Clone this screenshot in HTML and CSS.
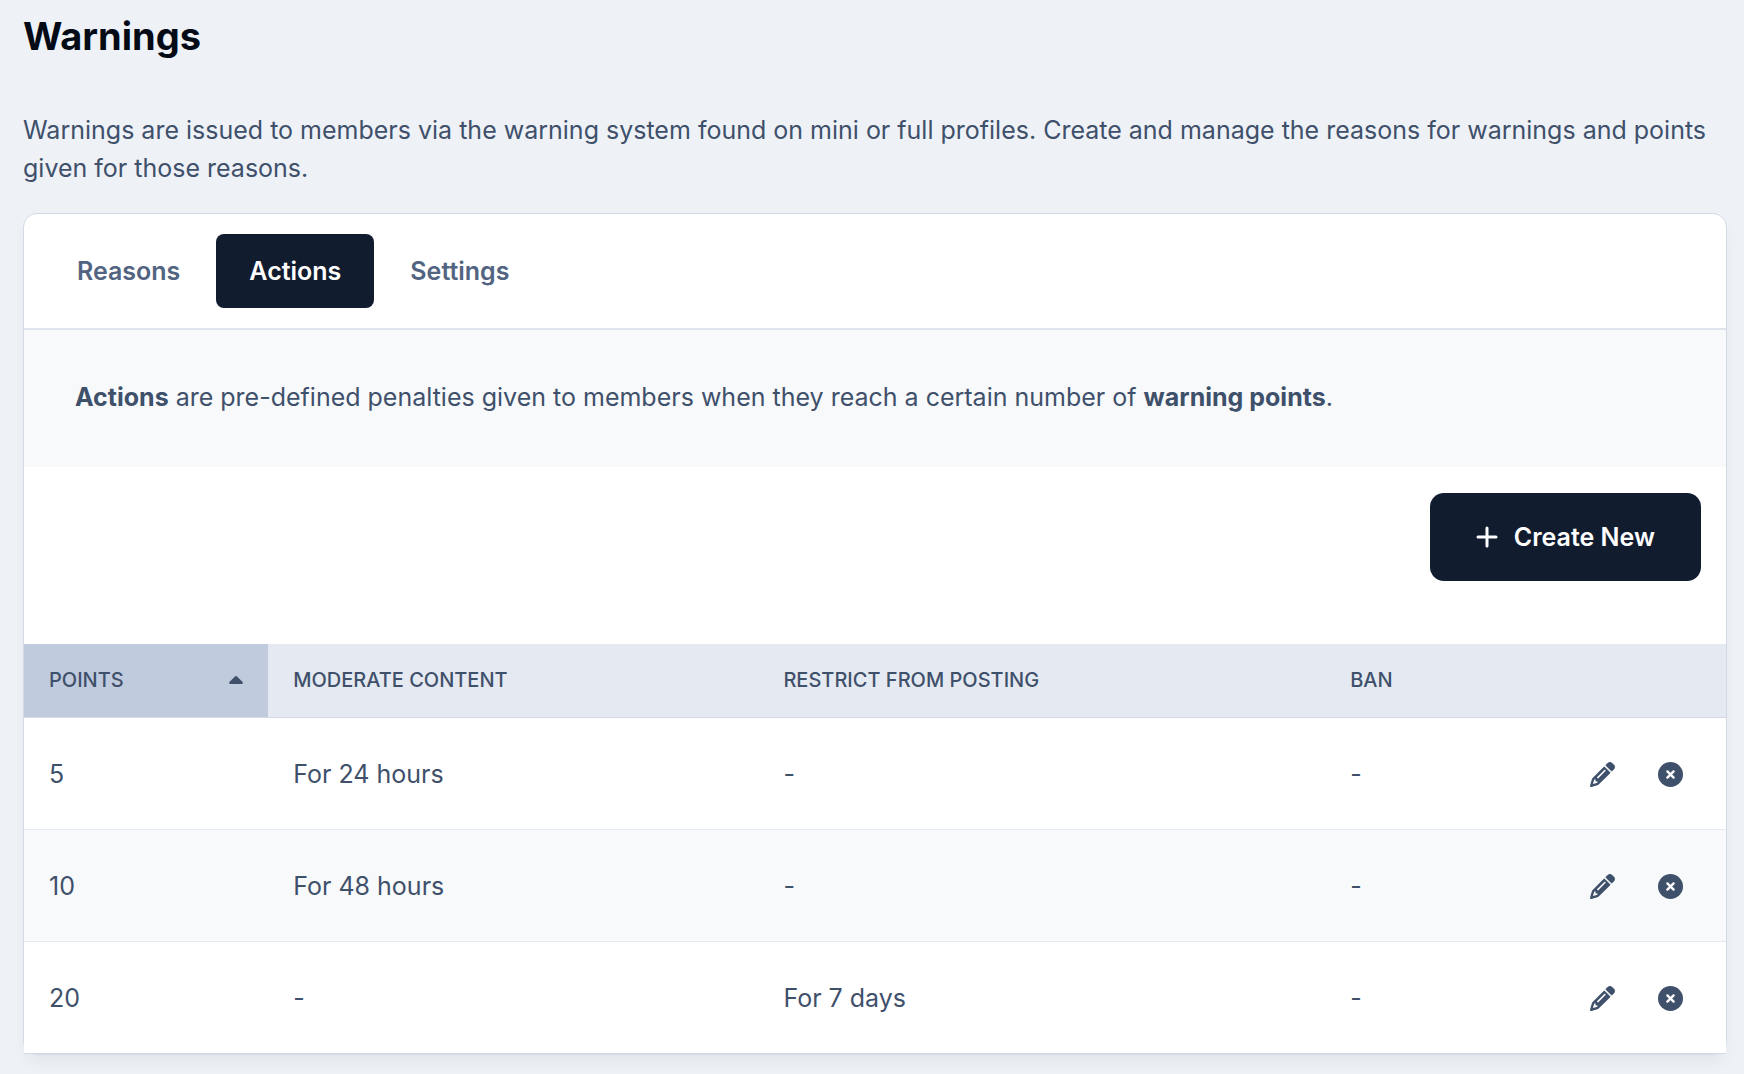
FILE: index.html
```html
<!DOCTYPE html>
<html lang="en">
<head>
    <meta charset="UTF-8">
    <meta name="viewport" content="width=device-width, initial-scale=1.0">
    <title>Warnings</title>
    <link rel="stylesheet" href="styles.css">
</head>
<body>
    <!-- Shared icons -->
    <svg class="sprite" aria-hidden="true">
        <symbol id="pencil" viewBox="0 0 512 512">
            <path d="M410.3 231l11.3-11.3-33.9-33.9-62.1-62.1L291.7 89.8l-11.3 11.3-22.6 22.6L58.6 322.9c-10.4 10.4-18 23.3-22.2 37.4L1 480.7c-2.5 8.4-.2 17.5 6.1 23.7s15.3 8.5 23.7 6.1l120.3-35.4c14.1-4.2 27-11.8 37.4-22.2L387.7 253.7 410.3 231zM160 399.4l-9.1 22.7c-4 3.1-8.5 5.4-13.3 6.9L59.4 452l23-78.1c1.4-4.9 3.8-9.4 6.9-13.3l22.7-9.1v32c0 8.8 7.2 16 16 16h32zM362.7 18.7L348.3 33.2 325.7 55.8 314.3 67.1l33.9 33.9 62.1 62.1 33.9 33.9 11.3-11.3 22.6-22.6 14.5-14.5c25-25 25-65.5 0-90.5L453.3 18.7c-25-25-65.5-25-90.5 0zm-47.4 168l-144 144c-6.2 6.2-16.4 6.2-22.6 0s-6.2-16.4 0-22.6l144-144c6.2-6.2 16.4-6.2 22.6 0s6.2 16.4 0 22.6z"/>
        </symbol>
        <symbol id="remove" viewBox="0 0 512 512">
            <circle cx="256" cy="256" r="256"/>
            <path d="M192 192l128 128M320 192L192 320" fill="none" stroke="#fff" stroke-width="48" stroke-linecap="round"/>
        </symbol>
    </svg>

    <main class="page">
        <h1>Warnings</h1>
        <p class="intro">Warnings are issued to members via the warning system found on mini or full profiles. Create and manage the reasons for warnings and points given for those reasons.</p>

        <section class="card">
            <nav class="tabs">
                <a href="#reasons" class="tab">Reasons</a>
                <a href="#actions" class="tab active" aria-current="page">Actions</a>
                <a href="#settings" class="tab">Settings</a>
            </nav>

            <p class="info"><strong>Actions</strong> are pre-defined penalties given to members when they reach a certain number of <strong>warning points</strong>.</p>

            <div class="toolbar">
                <button type="button" class="create">
                    <svg class="plus" viewBox="0 0 22 22" aria-hidden="true"><path d="M11 2v18M2 11h18"/></svg>
                    Create New
                </button>
            </div>

            <table>
                <thead>
                    <tr>
                        <th class="col-points" aria-sort="ascending">
                            <a href="#points" class="sort">Points
                                <svg class="caret" viewBox="0 0 14 8" aria-hidden="true"><path d="M6 .5Q7-.4 8 .5L13.600 6Q14.500 8 12.500 8H1.500Q-.5 8 .4 6z"/></svg>
                            </a>
                        </th>
                        <th class="col-moderate">Moderate Content</th>
                        <th class="col-restrict">Restrict From Posting</th>
                        <th>Ban</th>
                        <th class="col-controls"></th>
                    </tr>
                </thead>
                <tbody>
                    <tr>
                        <td>5</td>
                        <td>For 24 hours</td>
                        <td>-</td>
                        <td>-</td>
                        <td>
                            <div class="controls">
                                <button type="button" aria-label="Edit"><svg><use href="#pencil"/></svg></button>
                                <button type="button" aria-label="Delete"><svg><use href="#remove"/></svg></button>
                            </div>
                        </td>
                    </tr>
                    <tr>
                        <td>10</td>
                        <td>For 48 hours</td>
                        <td>-</td>
                        <td>-</td>
                        <td>
                            <div class="controls">
                                <button type="button" aria-label="Edit"><svg><use href="#pencil"/></svg></button>
                                <button type="button" aria-label="Delete"><svg><use href="#remove"/></svg></button>
                            </div>
                        </td>
                    </tr>
                    <tr>
                        <td>20</td>
                        <td>-</td>
                        <td>For 7 days</td>
                        <td>-</td>
                        <td>
                            <div class="controls">
                                <button type="button" aria-label="Edit"><svg><use href="#pencil"/></svg></button>
                                <button type="button" aria-label="Delete"><svg><use href="#remove"/></svg></button>
                            </div>
                        </td>
                    </tr>
                </tbody>
            </table>
        </section>
    </main>
</body>
</html>
```

FILE: styles.css
```css
* {
    margin: 0;
    padding: 0;
    box-sizing: border-box;
}

body {
    font-family: Inter, "Liberation Sans", sans-serif;
    font-size: 25px;
    line-height: 38px;
    background-color: #eef2f7;
    color: #3f506b;
}

a {
    color: inherit;
    text-decoration: none;
}

button {
    font: inherit;
    border: none;
    cursor: pointer;
}

.sprite {
    display: none;
}

.page {
    padding: 12px 17px 20px 23px;
}

h1 {
    font-size: 38px;
    line-height: 48px;
    font-weight: 700;
    color: #050b16;
    margin-bottom: 51px;
}

.intro {
    margin-bottom: 26px;
}

.card {
    background-color: #fff;
    border: 1px solid #d3dae6;
    border-radius: 14px;
    box-shadow: 0 10px 15px -3px rgba(17, 28, 47, 0.06);
}

/* Tabs */
.tabs {
    display: flex;
    gap: 3px;
    padding: 20px;
    border-bottom: 2px solid #dfe4ec;
}

.tab {
    padding: 18px 33px;
    border-radius: 8px;
    font-weight: 600;
    color: #526481;
}

.tab.active {
    background-color: #111c2f;
    color: #fff;
}

.info {
    padding: 48px 51px 51px;
    background-color: #f8f9fb;
}

.info strong {
    font-weight: 700;
}

/* Create button */
.toolbar {
    display: flex;
    justify-content: flex-end;
    padding: 26px 25px 63px;
}

.create {
    display: flex;
    align-items: center;
    gap: 16px;
    padding: 25px 46px;
    border-radius: 14px;
    background-color: #111c2f;
    color: #fff;
    font-weight: 600;
}

.plus {
    width: 22px;
    height: 22px;
    fill: none;
    stroke: #fff;
    stroke-width: 3;
    stroke-linecap: round;
}

/* Table */
table {
    width: 100%;
    table-layout: fixed;
    border-collapse: separate;
    border-spacing: 0;
    background-color: #fff;
}

th {
    padding: 17px 25px 18px;
    border-bottom: 1px solid #d3dae6;
    background-color: #e5eaf2;
    font-size: 20px;
    font-weight: 500;
    text-align: left;
    text-transform: uppercase;
}

.col-points {
    width: 14.35%;
    background-color: #c0cbde;
}

.col-moderate {
    width: 28.8%;
}

.col-restrict {
    width: 33.3%;
}

.sort {
    display: flex;
    align-items: center;
    justify-content: space-between;
}

.caret {
    width: 14px;
    height: 8px;
    fill: #3f506b;
}

td {
    padding: 37px 25px 36px;
    border-bottom: 1px solid #e5e9f0;
}

tbody tr:nth-child(even) {
    background-color: #f8f9fb;
}

tbody tr:last-child td {
    border-bottom-color: #d3dae6;
}

.controls {
    display: flex;
    justify-content: flex-end;
    align-items: center;
    gap: 6px;
}

.controls button {
    display: flex;
    justify-content: center;
    width: 62px;
    background: none;
}

.controls svg {
    width: 25px;
    height: 25px;
    fill: #3f506b;
}
```
